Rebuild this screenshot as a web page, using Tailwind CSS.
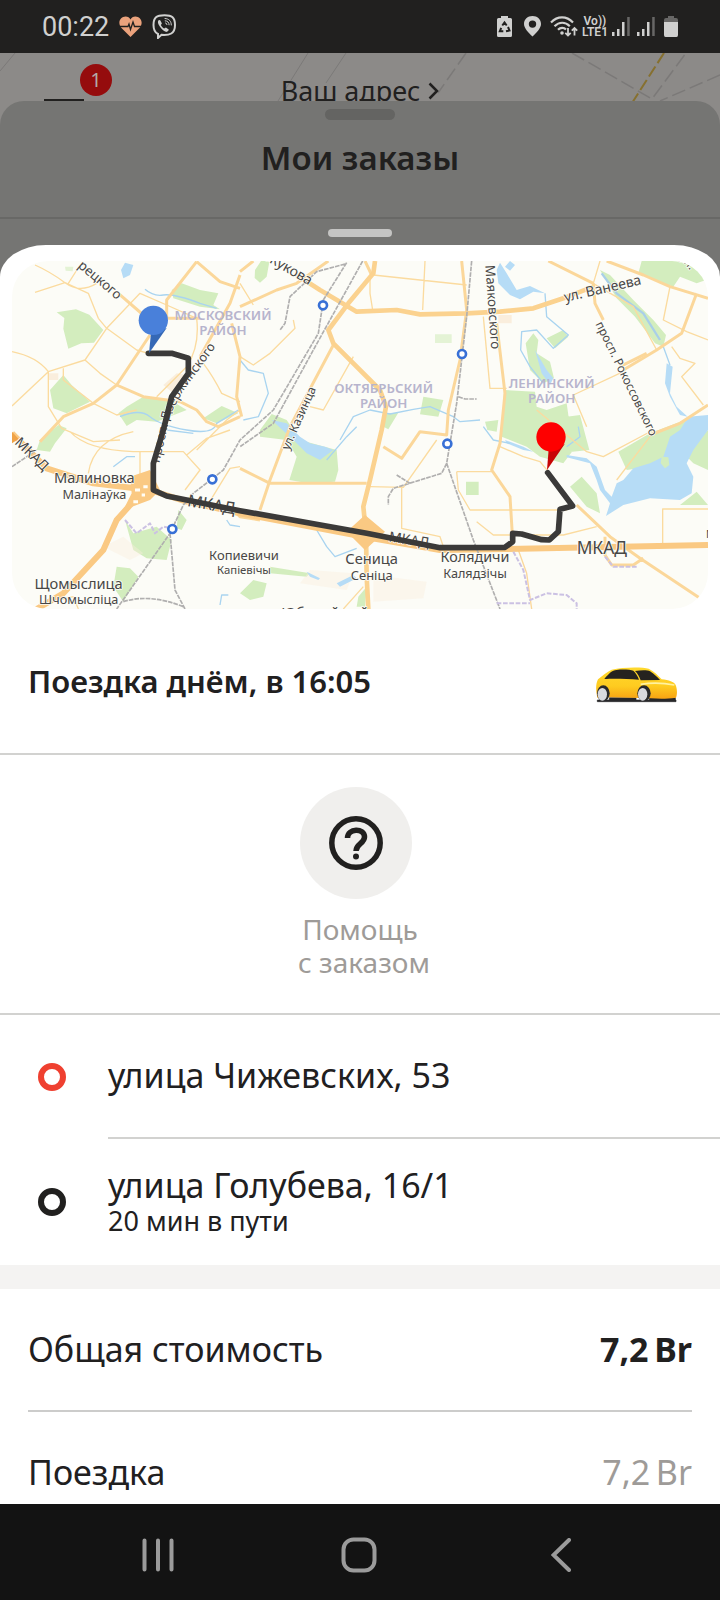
<!DOCTYPE html>
<html lang="ru">
<head>
<meta charset="utf-8">
<meta name="viewport" content="width=device-width, initial-scale=1">
<title>Мои заказы</title>
<script src="https://cdn.jsdelivr.net/npm/@tailwindcss/browser@4"></script>
</head>
<body class="flex min-h-screen flex-col overflow-x-hidden bg-[#8c8a88] font-['Noto_Sans',sans-serif] text-[#21201f]">

<!-- Status bar -->
<div class="flex h-[53px] items-center justify-between bg-[#21201f] px-[42px] text-[#d0d0cf]">
  <div class="flex items-center gap-[10px]">
    <span class="font-[Roboto,sans-serif] text-[27px] leading-8">00:22</span>
    <svg class="h-[22px] w-[23px]" viewBox="0 0 23 22" fill="none"><path d="M11.500 21 2 11.500C-2 6 2 .5 6.500.5c2.500 0 4 1.200 5 3 1-1.800 2.500-3 5-3C21 .5 25 6 21 11.500Z" fill="#eba27c"/><path d="M1 10.500h8l1-2.500 1.500 5.500L14 6l1.500 4.500H22" stroke="#21201f" stroke-width="1.300"/></svg>
    <svg class="h-[25px] w-[25px]" viewBox="0 0 25 25" fill="none" stroke="#d0d0cf" stroke-linecap="round"><path d="M12.500 1.200C4.500 1.200 1.500 3.500 1.500 11c0 5 1.300 7.500 4.500 9v4l3.500-3.200c8 .6 13.500-.8 13.500-9.800 0-7.500-3-9.800-10.500-9.800Z" stroke-width="2"/><path d="M7 6c-2 1.500-.8 4.200.8 6.500 1.700 2.500 3.700 4.300 6 5.300 1.600.7 3.400-1.600 2.900-2.200l-2.500-1.900c-.7-.4-1.500.9-2 .8-1.200-.4-2.900-2-3.300-3.400-.1-.6 1.100-1 .9-1.800L8.400 6.500C8 6 7.500 5.700 7 6Z" fill="#d0d0cf" stroke="none"/><path d="M13 4.500c4 .2 6.300 2.600 6.300 6.500M13.200 6.800c2.500.2 3.800 1.600 3.900 4M13.500 9c.9.1 1.400.6 1.400 1.600"/></svg>
  </div>
  <div class="flex items-center">
    <svg class="h-[22px] w-[15px]" viewBox="0 0 15 22"><path d="M4 0h7v2h2.500q1.500 0 1.500 1.500v16q0 1.500-1.500 1.500h-12Q0 21 0 19.500v-16Q0 2 1.500 2H4Z" fill="#d0d0cf"/><path d="M5.300 9.500 7.500 6.500l2.200 3M11 11l1.500 3.500-3.500.8M6.300 15.300H2.800l1.400-3.500" fill="none" stroke="#21201f" stroke-width="2"/></svg>
    <svg class="ml-3 h-[21px] w-[17px]" viewBox="0 0 17 21"><path fill-rule="evenodd" d="M8.500 0C3.500 0 0 3.500 0 8c0 4.500 5 9 8.500 12.500C12 17 17 12.500 17 8c0-4.500-3.500-8-8.500-8Zm0 11.800a3.700 3.700 0 1 1 0-7.400 3.700 3.700 0 0 1 0 7.400Z" fill="#d0d0cf"/></svg>
    <svg class="ml-[9px] h-[22px] w-[28px]" viewBox="0 0 28 22" fill="none" stroke="#d0d0cf" stroke-width="2.200"><path d="M1 6.500C7.500-.3 16.500-.3 23 6.500M4.500 10.300c4.600-4.700 10.800-4.700 15.300-.1M8 13.800c2.400-2.400 5.800-2.600 8-.2"/><circle cx="12" cy="17" r="1.800" fill="#d0d0cf" stroke="none"/><path d="M18 12v7.500m-2.700-2.700 2.700 2.700 2.700-2.700M24.500 19.500V12m-2.700 2.700 2.700-2.700 2.700 2.700" stroke-width="1.800"/></svg>
    <span class="ml-1 flex flex-col items-center font-[Roboto,sans-serif] text-[12px] leading-[11px] font-semibold"><span>Vo))</span><span>LTE1</span></span>
    <svg class="ml-1 h-5 w-[18px]" viewBox="0 0 18 20" fill="#d0d0cf"><path d="M0 15h2.500v4H0ZM5 12h2.500v7H5ZM10 5h2.500v14H10Z"/><path d="M15.200 0h2.500v19h-2.500Z" fill="#686766"/></svg>
    <svg class="ml-[7px] h-5 w-[18px]" viewBox="0 0 18 20" fill="#d0d0cf"><path d="M0 15h2.500v4H0ZM5 12h2.500v7H5ZM10 5h2.500v14H10Z"/><path d="M15.200 0h2.500v19h-2.500Z" fill="#686766"/></svg>
    <svg class="ml-[9px] h-[22px] w-[14px]" viewBox="0 0 14 22"><path d="M4 0h6v2h2q2 0 2 2v2H0V4q0-2 2-2h2Z" fill="#686766"/><path d="M0 6h14v13q0 2-1.500 2h-11Q0 21 0 19Z" fill="#d0d0cf"/></svg>
  </div>
</div>

<!-- Dimmed map header -->
<header class="relative h-[88px] overflow-hidden">
  <svg class="absolute inset-0 h-full w-full" viewBox="0 0 720 88" preserveAspectRatio="none" fill="none" stroke="#7b7978"><path d="M15 0 0 18M308 0 278 48M346 0 326 30"/><path d="M466 0 438 40M572 0l80 46 34-46M720 22l-60 26" stroke-dasharray="14 5" stroke-width="1.500"/><path d="M664 0 632 50" stroke="#86702f" stroke-width="2" stroke-dasharray="12 4"/></svg>
  <button type="button" aria-label="Меню, 1 уведомление" class="absolute top-[11px] left-11 h-10 w-[68px]">
    <span class="absolute bottom-[3px] left-0 h-0 w-10 border-t-2 border-[#21201f]"></span>
    <span class="absolute top-0 right-0 flex size-8 items-center justify-center rounded-full bg-[#950c0d] text-[20px] text-[#b3aaa8]">1</span>
  </button>
  <button type="button" class="relative mx-auto flex items-center pt-5 text-[27px] leading-9">Ваш адрес
    <svg class="ml-2 h-[18px] w-[11px]" viewBox="0 0 11 18" fill="none" stroke="#21201f" stroke-width="2.500"><path d="m1.500 1.500 7.500 7.500-7.500 7.500"/></svg>
  </button>
</header>

<!-- Orders sheet -->
<section class="relative -mt-10 flex flex-1 flex-col rounded-t-[24px] bg-[#757573]">
  <div class="flex h-[118px] flex-col items-center border-b-2 border-[#686866] pt-2">
    <span class="h-[11px] w-[70px] rounded-full bg-[#646462]"></span>
    <h1 class="mt-4 text-[33px] leading-[44px] font-semibold">Мои заказы</h1>
  </div>
  <div class="flex h-[26px] justify-center pt-[10px]"><span class="h-2 w-16 rounded-full bg-[#c4c4c3]"></span></div>

  <!-- Order details sheet -->
  <main class="flex flex-1 flex-col bg-white [border-radius:46px_46px_0_0/32px_32px_0_0]">
    <div class="px-3 pt-4">
      <svg class="block h-auto w-full rounded-[36px]" viewBox="36 33 2088 1044" role="img" aria-label="Маршрут поездки" fill="none" stroke-linejoin="round">
        <rect x="36" y="33" width="2088" height="1044" fill="#fcfcf7"/>
        <!-- Parks -->
        <g fill="#d3edbe">
          <path d="M170 187 228 178 268 194 310 240 282 278 244 280 205 296 190 236 193 204ZM190 375 215 405 270 455 200 490 160 475 150 420ZM515 120 545 100 600 120 655 130 640 165 660 178 600 170 520 145ZM355 490 380 470 430 440 520 455 560 480 470 515 410 510 380 528ZM610 505 665 468 715 490 650 520ZM120 570 175 525 200 535 165 580 150 605 110 600ZM765 60 785 30 808 36 800 80 780 98 764 84ZM780 540 815 492 860 510 900 570 1010 600 1015 660 1005 695 925 700 868 690 890 620 860 570 780 560ZM1270 440 1330 450 1315 500 1260 493ZM1160 490 1195 488 1165 538 1150 530ZM1398 695h38v40h-38Z"/>
          <path d="M195 50 220 50 218 64 197 62ZM1305 253h50v26h-50Z" opacity=".6"/>
          <path d="M1800 60 1830 75 1900 150 1960 210 1998 255 1990 290 1965 280 1905 200 1850 145ZM1925 33 2070 33 2118 90 2090 100 2040 80 2020 110 1960 90 1915 70ZM1577 280 1600 250 1615 270 1610 310 1650 335 1662 385 1630 400 1590 360ZM1640 265 1690 240 1705 260 1665 295ZM1512 420 1605 425 1610 470 1640 480 1700 460 1710 530 1720 600 1690 640 1620 620 1580 590 1505 560ZM1455 515 1495 510 1490 545 1462 540ZM1700 500 1740 495 1768 600 1710 606ZM1855 605 1950 550 2080 500 2040 560 2000 620 1950 650 1880 660ZM2050 610 2124 540 2124 660 2080 640ZM2040 765 2090 725 2124 765ZM1710 710 1745 680 1790 730 1800 790 1760 770ZM375 810 400 850 470 830 515 870 500 930 440 925 400 900ZM535 780 560 810 545 840 530 835ZM350 950 390 955 415 980 370 1055 340 1010ZM720 1030 760 990 800 1000 790 1040 750 1050ZM810 950 930 970 920 980 810 970ZM1070 1070 1075 1040 1100 1010 1095 1070Z"/>
        </g>
        <g fill="#faeedd"><path d="M490 405 530 370 560 375 520 430ZM145 370h30v20h-30ZM1495 195h40v25h-40Z"/><path d="M310 890l60-30 60 50-40 20ZM930 960l130 10-20 50-140-20ZM1120 975l160 20-10 50-150 10Z" opacity=".4"/></g>
        <!-- Water -->
        <g fill="#b6dcf6">
          <path d="M363 60 375 38 400 45 390 75 370 85ZM1500 38 1520 70 1550 120 1590 108 1635 130 1600 125 1560 148 1530 135 1495 100 1490 60ZM1530 33 1545 45 1530 62 1515 50ZM1605 300 1640 360 1660 385 1650 405 1625 370ZM2000 340 2018 350 2010 430 2030 470 2063 500 2040 495 2010 440 1995 400ZM815 510 860 520 900 560 930 580 975 590 1000 600 960 630 920 610 880 570ZM1010 1000 1060 975 1070 985 1020 1010ZM920 965 960 985 955 990 930 980Z"/>
          <path d="M2124 495 2065 500 2040 540 2010 560 1990 620 1950 640 1900 655 1870 690 1850 700 1835 740 1815 720 1790 650 1760 625 1700 615 1700 622 1770 640 1790 690 1800 720 1830 760 1818 798 1870 765 1950 745 2040 750 2075 730 2080 680 2060 640 2080 600 2124 540Z"/>
          <path d="M1515 570 1570 590 1600 605 1570 600 1520 580Z"/>
        </g>
        <path d="M1985 620 2005 622 2008 645 1995 655 1982 640Z" fill="#d3edbe"/>
        <g stroke="#a9d4f0" stroke-width="4"><path d="M435 118 Q460 140 490 135T600 160L650 175M360 500Q420 475 450 500T560 540T650 520L715 480M720 330 745 360 790 370 805 430 775 500 730 510M1020 570 1060 500 1110 480 1170 492 1240 478 1290 470 1360 500 1380 515 1440 510"/><path d="M1635 130 1640 200 1705 255 1660 295 1610 240 1565 245 1562 300 1590 350 1630 400M1700 590 1740 560 1735 530M1450 530 1480 570 1530 580M980 630 1040 560 1070 530M950 840 980 890 1005 920 1070 895M340 650 380 620 405 620M680 810 690 825 720 830M660 1065 665 1035 685 1035M1990 290 2010 345M500 540 580 550" /></g>
        <path d="M1805 70 1850 130 1930 190 1980 270" stroke="#a9cfe8" stroke-width="7"/>
        <!-- Minor roads -->
        <g stroke="#fbdb9f" stroke-width="4">
          <path d="M105 45Q150 65 195 98T290 100M105 127 195 98 265 130 295 205 320 235 410 300 445 310M240 45 205 100M320 235 420 130 500 165 590 205M320 235 255 330 145 365 36 468M36 305Q110 320 145 365V470L185 535 280 575 360 570M190 355V390L280 460 350 495 410 480M255 330 300 370 350 405M590 205Q600 290 560 350L470 440M610 340Q640 380 665 430L720 455M590 600 680 510 720 480M210 545Q260 600 400 605H550L600 660 555 720M560 615 620 565 690 540M265 670Q280 570 400 545M420 605V680M620 770 690 655 720 650"/>
          <path d="M720 100 760 165M880 210 885 235 810 310 760 345 720 320M1120 75 1400 105M1275 33 1268 180M1110 75V130L1118 180M1060 320 970 480 930 470M1205 705V835L1320 860 1330 890M1110 710 1210 712 1310 570M1370 665H1440M1370 665 1375 720 1410 780H1700M1430 815 1480 855H1690L1790 830M1440 665H1480M1450 200 1470 415H1520M1800 33 1780 100M1610 480 1760 605 1810 620 1960 540M1720 435 1870 365M1720 435 1760 530M1770 95 1900 170 1970 300M2010 110 1990 210 2060 245 2124 270M2015 290 2040 325 2085 340 2045 380 2110 465M1988 885V777H2124M1500 590 1570 620 1620 635 1645 665"/>
          <path d="M175 1050 220 1040 235 1077M1030 1077 1090 1010M1850 690 1950 560"/>
        </g>
        <!-- Main roads -->
        <g stroke="#fbd79a" stroke-width="9">
          <path d="M355 130 430 195 450 205H600M590 35 500 150V205M590 35 660 95 720 115M720 75 690 160 600 320M450 255 350 405 430 440 540 455 590 480 620 515 655 530 720 500M350 405 280 460 190 500 120 575M720 170 830 120 890 100 985 33M720 65 760 33M695 220 720 320 710 440 725 500M1645 33 1780 100M1780 100 1785 160 1810 210M1820 33 1930 75 2010 110 2124 145M2090 130 2045 250 1970 300 1870 360M1950 555 2040 520 2124 465M1490 220 1515 430 1500 580 1475 660 1530 740 1538 870M1730 765 1830 860 1920 925 2100 1045M1000 285 870 530 810 690 780 780M810 700H1100M1385 33 1400 180 1380 330 1345 480 1340 555 1260 545 1205 625 1150 590M720 655 810 700M1815 860V915L1835 945 1900 945 1930 925"/>
          <path d="M1095 33 1115 75 1045 160M1860 350 1940 310M700 780 720 800 780 810"/>
          <path d="M1555 900 1580 970 1595 1077" stroke-width="4"/>
        </g>
        <path d="M890 75 960 120 1070 185 1190 180 1260 193 1400 190 1500 185 1600 175 1690 145 1780 110M1125 33 1120 70 1045 160 985 240 1000 280 1140 420 1158 470 1145 540 1110 690 1090 770 1098 850 1100 980 1105 1077" stroke="#fbd28f" stroke-width="14"/>
        <path d="M36 550 140 655 280 700 450 720 560 755 720 790 1100 862 1320 900 1520 897 2124 885M440 710 350 810 310 900 190 1030 110 1077" stroke="#fac983" stroke-width="18"/>
        <path d="M390 680 450 660 480 720 450 750 370 780 395 730ZM1040 845 1095 795 1155 845 1095 900Z" fill="#fac983"/>
        <path d="M405 720h15M430 710h13M400 755h14M425 735h10" stroke="#fffdf5" stroke-width="9"/>
        <!-- Railways and boundaries -->
        <g stroke="#b0afaf" stroke-width="5" stroke-dasharray="14 3"><path d="M1040 38 970 150 955 250 820 480 720 570 670 660 580 730 550 765 510 850 350 1077M1088 33 940 300 820 520 720 590M1035 42 950 65 870 140 855 220 840 240M510 850 525 1020 555 1077M370 1055Q450 1030 550 1070M1415 33 1400 200 1370 460 1340 640 1420 870 1500 1077M1375 440 1395 447H1430M1340 640 1325 670 1180 715 1165 740V765M1190 675 1230 700M36 650 110 600"/></g>
        <g stroke="#cbc1e3" stroke-width="6" stroke-dasharray="14 5"><path d="M375 810 410 850 450 820 465 850 490 830 515 835M1540 905 1570 960 1590 1050 1640 1030 1700 1035 1730 1060V1077M1490 1060H1590M1815 920 1840 950 1910 950"/></g>
        <path d="M36 580v-35l20 22Z" fill="#f0a347"/>
        <!-- Stations -->
        <g fill="#fff" stroke="#3870d6" stroke-width="8"><circle cx="969" cy="166" r="12"/><circle cx="1386" cy="312" r="12"/><circle cx="1342" cy="581" r="12"/><circle cx="637" cy="688" r="12"/><circle cx="517" cy="837" r="12"/></g>
        <!-- District names -->
        <g fill="#b7b4cd" font-size="40" font-weight="600" text-anchor="middle"><text x="669" y="210">МОСКОВСКИЙ</text><text x="669" y="255">РАЙОН</text><text x="1151" y="428">ОКТЯБРЬСКИЙ</text><text x="1151" y="473">РАЙОН</text><text x="1655" y="415">ЛЕНИНСКИЙ</text><text x="1655" y="460">РАЙОН</text></g>
        <!-- Streets and settlements -->
        <g fill="#484746" stroke="#fcfcf7" stroke-width="5" paint-order="stroke">
          <path id="dzer" d="M478 640 512 490 552 420 666 265" stroke="none" fill="none"/>
          <g font-size="40">
            <text transform="translate(232 50) rotate(40)">рецкого</text>
            <text transform="translate(795 30) rotate(30)" font-size="42">Жукова</text>
            <text transform="translate(1456 46) rotate(86)">Маяковского</text>
            <text transform="translate(1696 156) rotate(-13)" font-size="42">ул. Ванеева</text>
            <text transform="translate(1786 222) rotate(64)" font-size="36">просп. Рокоссовского</text>
            <text transform="translate(866 602) rotate(-66)" font-size="36">ул. Казинца</text>
            <text font-size="38"><textPath href="#dzer">просп. Дзержинского</textPath></text>
            <text transform="translate(42 580) rotate(44)" font-size="42">МКАД</text>
            <text transform="translate(2040 25) rotate(50)" font-size="36">ул.</text>
            <text x="2118" y="864" font-size="32">МКАД</text>
          </g>
          <g font-size="44"><text transform="translate(560 768) rotate(10)" font-size="50">МКАД</text><text transform="translate(1165 874) rotate(9)" font-size="42">МКАД</text><text x="1730" y="911" font-size="52">МКАД</text></g>
          <g text-anchor="middle" font-size="44">
            <text x="283" y="700">Малиновка</text><text x="283" y="748" font-size="38">Малінаўка</text>
            <text x="732" y="930" font-size="39">Копиевичи</text><text x="732" y="972" font-size="34">Капіевічы</text>
            <text x="1115" y="943">Сеница</text><text x="1115" y="990" font-size="39">Сеніца</text>
            <text x="1425" y="937" font-size="43">Колядичи</text><text x="1425" y="983" font-size="38">Калядзічы</text>
            <text x="236" y="1017">Щомыслица</text><text x="236" y="1063" font-size="38">Шчомысліца</text>
            <text x="975" y="1104">Юбилейный</text>
          </g>
        </g>
        <!-- Route -->
        <path d="M445 310H515L565 325V370L515 440 490 540 460 640V720L500 738 560 750 720 782 1100 850 1320 893 1515 892 1538 875V850L1565 852 1625 869 1648 870 1675 845 1680 778 1718 768 1643 668" stroke="#3b3a39" stroke-width="17" stroke-linecap="round"/>
        <path d="M453 248 447 310 500 234Z" fill="#3568b5"/><circle cx="460" cy="211" r="44" fill="#4980da"/>
        <path d="M1646 598 1641 660 1694 582Z" fill="#c80505"/><circle cx="1653" cy="561" r="44" fill="#fe0000"/>
      </svg>
    </div>

    <div class="flex h-[146px] items-center justify-between border-b-2 border-[#d2d2d0] pr-[42px] pl-7">
      <h2 class="text-[31px] leading-10 font-semibold">Поездка днём, в 16:05</h2>
      <svg class="mt-2 h-9 w-[82px]" viewBox="0 0 246 108" role="img" aria-label="Жёлтый автомобиль">
        <defs><linearGradient id="paint" x1="0" y1="0" x2="0" y2="1"><stop offset="0" stop-color="#ffd92e"/><stop offset=".6" stop-color="#fecb20"/><stop offset="1" stop-color="#f7a313"/></linearGradient></defs>
        <path d="M4 99H240V104H4ZM40 92h80v8H40ZM160 92h78v8h-78Z" fill="#29292b" stroke="#29292b" stroke-width="2"/>
        <path d="M4 92C-1 70-1 50 6 37 20 25 35 14 47 8 80 0 140 0 158 5c16 8 28 20 39 32 22 2 37 8 42 17 5 12 5 28 1 38-30 4-50 3-76 2L40 91C30 94 14 94 4 92Z" fill="url(#paint)"/>
        <path d="M25 36C38 20 48 10 62 9c20-3 42 0 50 2 7 6 13 16 17 27C90 35 50 34 25 36ZM117 12c20-3 38-3 45 1 14 9 22 18 30 26l-58 1c-4-12-10-22-17-28Z" fill="#25231f"/>
        <path d="M134 52C170 46 205 48 235 54" fill="none" stroke="#fff2a0" stroke-width="5"/>
        <g fill="#29292b"><ellipse cx="22" cy="79" rx="19" ry="24"/><ellipse cx="144" cy="79" rx="20" ry="24"/></g>
        <g fill="#d9dadf"><ellipse cx="19" cy="82" rx="14" ry="19"/><ellipse cx="140" cy="82" rx="14" ry="19"/></g>
      </svg>
    </div>

    <div class="flex h-[260px] justify-center border-b-2 border-[#d2d2d0] pt-8 pl-2">
      <button type="button" class="flex w-[128px] flex-col self-start text-[28px] leading-[33px] text-[#9e9b98]">
        <span class="mb-[14px] flex size-28 items-center justify-center rounded-full bg-[#f0efed]">
          <svg class="size-[54px]" viewBox="0 0 54 54" fill="none" stroke="#21201f" stroke-width="5.500"><circle cx="27" cy="27" r="24.200"/><path d="M18.500 22c0-10 17-10.500 17-1 0 6.500-8.500 7-8.500 14" /><circle cx="27" cy="40.500" r="3" fill="#21201f" stroke="none"/></svg>
        </span>
        <span class="self-center pr-2">Помощь</span><span class="self-center whitespace-nowrap">с заказом</span>
      </button>
    </div>

    <ul class="text-[34px] leading-10">
      <li class="flex items-stretch">
        <span class="flex w-[108px] shrink-0 items-center pl-[38px]"><span class="size-7 rounded-full border-[6px] border-[#ef4030]"></span></span>
        <span class="flex h-[124px] flex-1 items-center border-b-2 border-[#d2d2d0] pb-[2px]">улица Чижевских, 53</span>
      </li>
      <li class="flex h-[126px] items-center">
        <span class="w-[108px] shrink-0 pl-[38px]"><span class="block size-7 rounded-full border-[6px] border-[#21201f]"></span></span>
        <span class="flex flex-col pb-[2px]"><span>улица Голубева, 16/1</span><span class="text-[27px] leading-8">20 мин в пути</span></span>
      </li>
    </ul>
    <div class="h-6 bg-[#f4f3f2]"></div>
    <dl class="px-7 text-[34px] leading-10">
      <div class="flex h-[123px] items-center justify-between border-b-2 border-[#cccccb] pb-[2px]"><dt>Общая стоимость</dt><dd class="font-bold">7,2&#8201;Br</dd></div>
      <div class="flex h-[92px] items-end justify-between pb-3"><dt>Поездка</dt><dd class="text-[#9e9b98]">7,2&#8201;Br</dd></div>
    </dl>
  </main>
</section>

<!-- System navigation -->
<nav class="relative flex h-24 items-center justify-between bg-[#131313] pt-[6px] pr-[137px] pl-[142px]" aria-label="Системная навигация">
  <button type="button" aria-label="Недавние" class="flex h-10 items-center"><svg class="h-[34px] w-8" viewBox="0 0 32 34" stroke="#9b9b9b" stroke-width="4" stroke-linecap="round"><path d="M2.500 2.500v29M16 2.500v29M29.500 2.500v29"/></svg></button>
  <button type="button" aria-label="Домой" class="mr-2 flex h-10 items-center"><svg class="size-9" viewBox="0 0 36 36" fill="none" stroke="#9b9b9b" stroke-width="4"><rect x="2.500" y="2.500" width="31" height="31" rx="10"/></svg></button>
  <button type="button" aria-label="Назад" class="flex h-10 w-8 items-center"><svg class="h-[34px] w-5" viewBox="0 0 20 34" fill="none" stroke="#9b9b9b" stroke-width="4" stroke-linecap="round"><path d="M18 2 2.500 17 18 32"/></svg></button>
</nav>
</body>
</html>
